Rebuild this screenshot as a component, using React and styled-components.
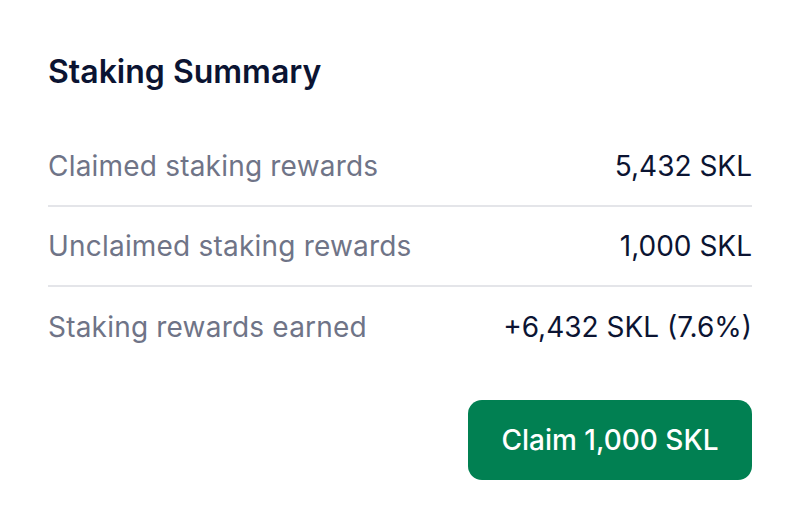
import React from "react";
import styled, { createGlobalStyle } from "styled-components";

const GlobalStyle = createGlobalStyle`
  body {
    margin: 0;
    background: #ffffff;
    font-family: Inter, "Noto Sans", sans-serif;
  }
`;

const Card = styled.section`
  width: 800px;
  height: 528px;
  box-sizing: border-box;
  padding: 48px 48px 0;
  display: flex;
  flex-direction: column;
`;

const Title = styled.h2`
  margin: 0 0 31px;
  font-size: 32px;
  line-height: 48px;
  font-weight: 600;
  color: #0b1432;
`;

const List = styled.div`
  display: flex;
  flex-direction: column;
`;

const Row = styled.div`
  display: flex;
  justify-content: space-between;
  align-items: center;
  height: 80px;
  box-sizing: border-box;
  border-bottom: ${(p) => (p.last ? "none" : "2px solid #e4e5e9")};
`;

const Label = styled.span`
  font-size: 28px;
  letter-spacing: 0.2px;
  color: #6f7487;
`;

const Value = styled.span`
  font-size: 28px;
  color: #0b1432;
`;

const Actions = styled.div`
  display: flex;
  justify-content: flex-end;
  margin-top: 33px;
`;

const ClaimButton = styled.button`
  width: 284px;
  height: 80px;
  border: none;
  border-radius: 14px;
  background: #018052;
  color: #ffffff;
  font-family: inherit;
  font-size: 28px;
  font-weight: 500;
  cursor: pointer;
`;

const rows = [
  { label: "Claimed staking rewards", value: "5,432 SKL" },
  { label: "Unclaimed staking rewards", value: "1,000 SKL" },
  { label: "Staking rewards earned", value: "+6,432 SKL (7.6%)" },
];

function App() {
  return (
    <>
      <GlobalStyle />
      <Card>
        <Title>Staking Summary</Title>
        <List>
          {rows.map((r, i) => (
            <Row key={r.label} last={i === rows.length - 1}>
              <Label>{r.label}</Label>
              <Value>{r.value}</Value>
            </Row>
          ))}
        </List>
        <Actions>
          <ClaimButton>Claim 1,000 SKL</ClaimButton>
        </Actions>
      </Card>
    </>
  );
}

export default App;
